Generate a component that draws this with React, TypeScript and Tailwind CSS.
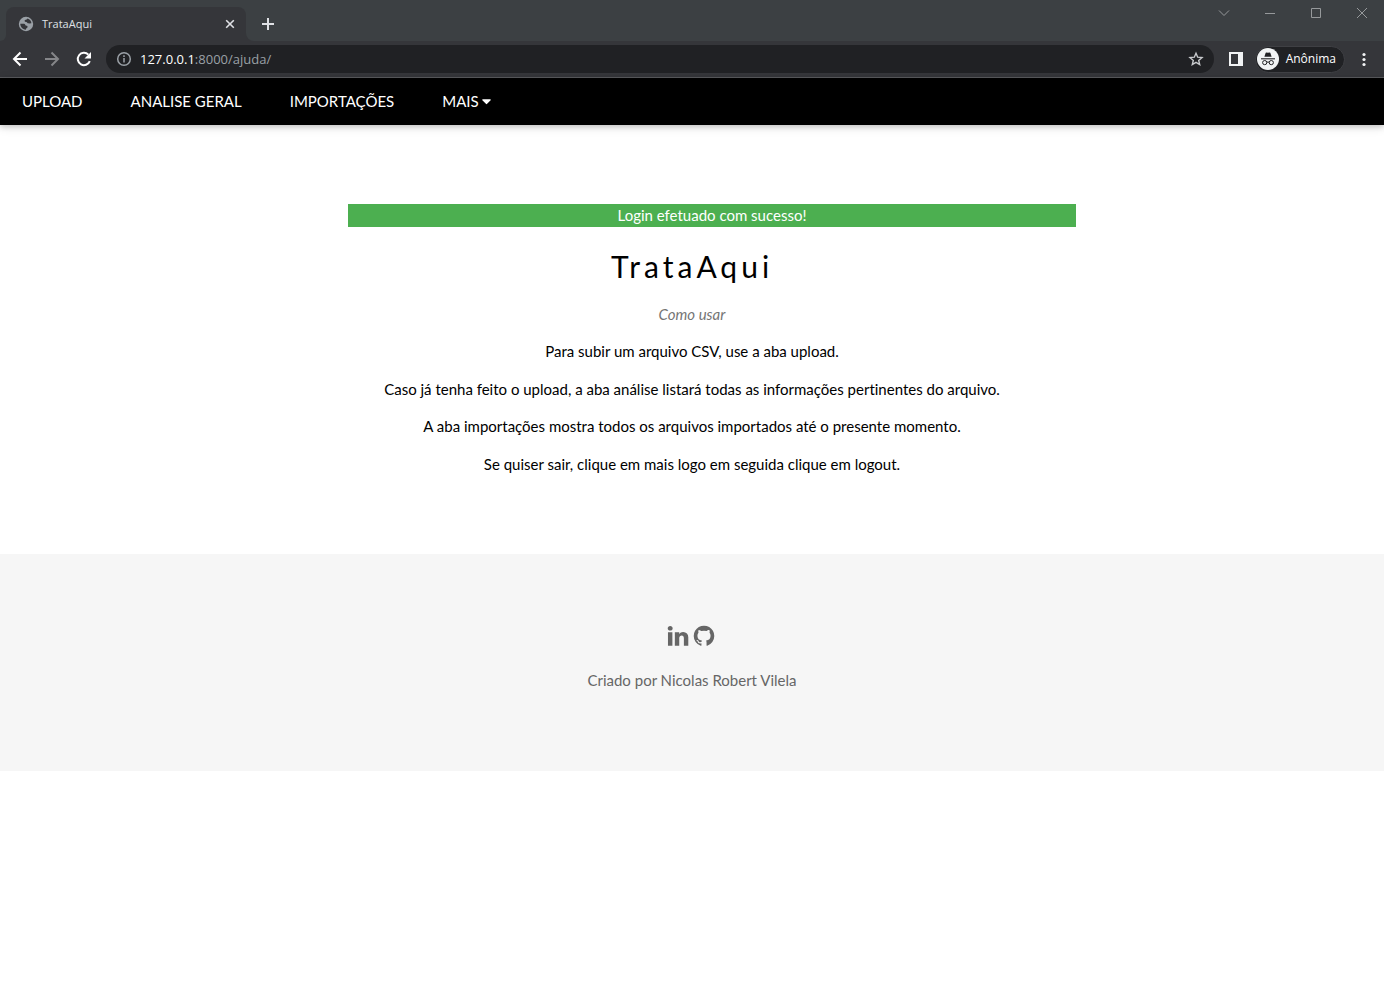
import React from "react";

function BrowserTabs() {
  return (
    <div className="flex h-[41px] items-start bg-[#3c4043]">
      <div className="flex h-[41px] items-end">
        <div className="h-2 w-[6px] bg-[#35363a]">
          <div className="h-2 w-[6px] rounded-br-lg bg-[#3c4043]" />
        </div>
        <div className="flex h-[34px] w-[240px] items-center rounded-t-lg bg-[#35363a] pr-2 pl-3">
          <svg className="size-4" viewBox="0 0 16 16" aria-hidden="true">
            <circle cx="8" cy="8" r="7.2" fill="#9aa0a6" />
            <path
              d="M9.400 2.500c-.3 1.300-1.500 1.200-2.300 1.500-.8.400-.7 1.400.1 1.700.9.300 1.600.1 1.900.9.300.8 1 .9 1.900.9l2.400-.2c0-2.200-1.600-4.200-4-4.800zM2.300 7.800c-.1 2.900 2.200 5.600 5.500 5.900.2-.8.300-1.400 1.100-1.700.9-.4.900-1.700.1-2.200-.7-.4-1.400-.2-1.700-.9-.3-.8-.9-1.100-1.900-1.100z"
              fill="#35363a"
            />
          </svg>
          <span className="ml-2 flex-1 font-['Open_Sans','Noto_Sans',sans-serif] text-[11px] text-[#dfe1e5]">
            TrataAqui
          </span>
          <button type="button" aria-label="Fechar guia" className="p-[2px]">
            <svg className="size-3" viewBox="0 0 12 12" stroke="#dfe1e5" strokeWidth="1.6" aria-hidden="true">
              <path d="M2.200 2.200l7.600 7.600M9.800 2.200l-7.600 7.600" />
            </svg>
          </button>
        </div>
        <div className="h-2 w-2 bg-[#35363a]">
          <div className="h-2 w-2 rounded-bl-lg bg-[#3c4043]" />
        </div>
      </div>
      <button type="button" aria-label="Nova guia" className="mt-4 ml-[6px]">
        <svg className="size-4" viewBox="0 0 16 16" stroke="#dfe1e5" strokeWidth="2" aria-hidden="true">
          <path d="M8 2v12M2 8h12" />
        </svg>
      </button>
      <div className="ml-auto flex gap-[30px] pt-[5px] pr-[14px]">
        <button type="button" aria-label="Pesquisar guias">
          <svg className="size-4" viewBox="0 0 16 16" fill="none" stroke="#96999b" aria-hidden="true">
            <path d="M3 5.500l5 5 5-5" />
          </svg>
        </button>
        <button type="button" aria-label="Minimizar">
          <svg className="size-4" viewBox="0 0 16 16" stroke="#96999b" aria-hidden="true">
            <path d="M3 8.500h10" />
          </svg>
        </button>
        <button type="button" aria-label="Maximizar">
          <svg className="size-4" viewBox="0 0 16 16" fill="none" stroke="#96999b" aria-hidden="true">
            <path d="M3.500 3.500h9v9h-9z" />
          </svg>
        </button>
        <button type="button" aria-label="Fechar">
          <svg className="size-4" viewBox="0 0 16 16" stroke="#96999b" aria-hidden="true">
            <path d="M3 3l10 10M13 3L3 13" />
          </svg>
        </button>
      </div>
    </div>
  );
}

function BrowserToolbar() {
  return (
    <div className="flex h-[37px] items-center border-b border-[#5b5c5f] bg-[#35363a] pr-3 pl-[10px] font-['Open_Sans','Noto_Sans',sans-serif]">
      <div className="flex gap-3">
        <button type="button" aria-label="Voltar">
          <svg className="size-5" viewBox="0 0 20 20" fill="none" stroke="#fff" strokeWidth="2" aria-hidden="true">
            <path d="M17 10H4.500M10.500 3.500L4 10l6.500 6.500" />
          </svg>
        </button>
        <button type="button" aria-label="Avançar">
          <svg className="size-5" viewBox="0 0 20 20" fill="none" stroke="#858689" strokeWidth="2" aria-hidden="true">
            <path d="M3 10h12.500M9.500 3.500L16 10l-6.500 6.500" />
          </svg>
        </button>
        <button type="button" aria-label="Recarregar">
          <svg className="size-5" viewBox="0 0 20 20" fill="none" aria-hidden="true">
            <path d="M15.800 12.200A6.200 6.200 0 1 1 14.400 5.600" stroke="#fff" strokeWidth="2" />
            <path d="M17 3v6.500h-6.500z" fill="#fff" />
          </svg>
        </button>
      </div>
      <div className="ml-3 flex h-7 flex-1 items-center rounded-full bg-[#202124] pr-[10px] pl-[10px]">
        <svg className="size-4" viewBox="0 0 16 16" fill="none" stroke="#9aa0a6" strokeWidth="1.500" aria-hidden="true">
          <circle cx="8" cy="8" r="6.300" />
          <path d="M8 7v4.500M8 4.300v1.600" />
        </svg>
        <p className="ml-2 flex-1 text-[13px] leading-5 text-[#9aa0a6]">
          <span className="text-white">127.0.0.1</span>:8000/ajuda/
        </p>
        <button type="button" aria-label="Adicionar aos favoritos">
          <svg className="size-4" viewBox="0 0 16 16" fill="none" stroke="#c8cacd" strokeWidth="1.400" aria-hidden="true">
            <path d="M8 2.200l1.700 4 4.300.4-3.300 2.800 1 4.200L8 11.400l-3.700 2.200 1-4.200L2 6.600l4.300-.4z" />
          </svg>
        </button>
      </div>
      <button type="button" aria-label="Painel lateral" className="ml-[14px]">
        <svg className="size-4" viewBox="0 0 16 16" aria-hidden="true">
          <path fillRule="evenodd" d="M1 1h14v14H1zM3 3v10h7V3z" fill="#f1f3f4" />
        </svg>
      </button>
      <button
        type="button"
        className="ml-[11px] flex h-[27px] items-center rounded-full border border-[#3f4044] bg-[#202124] pr-2 pl-px text-xs text-white"
      >
        <svg className="size-[22px]" viewBox="0 0 22 22" aria-hidden="true">
          <circle cx="11" cy="11" r="11" fill="#f1f3f4" />
          <path d="M7.400 8.800l1.300-4 .9-.4 1.400.4 1.400-.4.9.4 1.300 4z" fill="#202124" />
          <path d="M4 10.800h14" stroke="#202124" strokeWidth="1.100" />
          <g fill="none" stroke="#202124" strokeWidth="1">
            <circle cx="7.700" cy="14.600" r="2.100" />
            <circle cx="14.300" cy="14.600" r="2.100" />
            <path d="M9.800 14.300q1.200-.7 2.400 0" />
          </g>
        </svg>
        <span className="ml-[7px]">Anônima</span>
      </button>
      <button type="button" aria-label="Mais opções" className="ml-[11px]">
        <svg className="size-4" viewBox="0 0 16 16" fill="#f1f3f4" aria-hidden="true">
          <circle cx="8" cy="3.500" r="1.600" />
          <circle cx="8" cy="8.500" r="1.600" />
          <circle cx="8" cy="13.500" r="1.600" />
        </svg>
      </button>
    </div>
  );
}

const links = [
  { label: "UPLOAD", href: "#upload" },
  { label: "ANALISE GERAL", href: "#analise" },
  { label: "IMPORTAÇÕES", href: "#importacoes" },
];

function SiteNav() {
  return (
    <nav className="flex h-[47px] items-center gap-12 bg-black pl-[22px] text-white shadow-[0_2px_5px_0_rgba(0,0,0,0.16),0_2px_10px_0_rgba(0,0,0,0.12)]">
      {links.map((link) => (
        <a key={link.href} href={link.href}>
          {link.label}
        </a>
      ))}
      <button type="button" className="flex items-center">
        MAIS
        <svg className="size-[15px]" viewBox="0 0 1792 1792" fill="currentColor" aria-hidden="true">
          <path d="M1408 704q0 26-19 45l-448 448q-19 19-45 19t-45-19l-448-448q-19-19-19-45t19-45 45-19h896q26 0 45 19t19 45z" />
        </svg>
      </button>
    </nav>
  );
}

const steps = [
  "Para subir um arquivo CSV, use a aba upload.",
  "Caso já tenha feito o upload, a aba análise listará todas as informações pertinentes do arquivo.",
  "A aba importações mostra todos os arquivos importados até o presente momento.",
  "Se quiser sair, clique em mais logo em seguida clique em logout.",
];

function Help() {
  return (
    <main className="mx-auto max-w-[800px] px-4 pt-[79px] pb-[79px] text-center">
      <ul className="pl-10">
        <li className="bg-[#4caf50] text-white">Login efetuado com sucesso!</li>
      </ul>
      <h2 className="mt-4 text-3xl leading-[46px] tracking-[4px]">TrataAqui</h2>
      <div className="mt-[14px] flex flex-col gap-[15px]">
        <p className="text-[#757575] italic">Como usar</p>
        {steps.map((step) => (
          <p key={step}>{step}</p>
        ))}
      </div>
    </main>
  );
}

function Footer() {
  return (
    <footer className="bg-[#f6f6f6] pt-[70px] pb-[79px] text-center text-[#666666]">
      <div className="flex justify-center gap-[2px] pr-[2px]">
        <a href="#linkedin" aria-label="LinkedIn">
          <svg className="size-6" viewBox="0 0 1792 1792" fill="currentColor" aria-hidden="true">
            <path d="M477 625v991h-330v-991h330zm21-306q1 73-50.5 122t-135.5 49h-2q-82 0-132-49t-50-122q0-74 51.5-122.5t134.5-48.5 133 48.5 51 122.5zm1166 729v568h-329v-530q0-105-40.5-164.5t-126.5-59.5q-63 0-105.5 34.5t-63.5 85.5q-11 30-11 81v553h-329q2-399 2-647t-1-296l-1-48h329v144h-2q20-32 41-56t56.5-52 87-43.5 114.5-15.5q171 0 278 113.5t107 332.5z" />
          </svg>
        </a>
        <a href="#github" aria-label="GitHub">
          <svg className="size-6" viewBox="0 0 1792 1792" fill="currentColor" aria-hidden="true">
            <path d="M896 128q209 0 385.5 103t279.5 279.5 103 385.5q0 251-146.5 451.5t-378.5 277.5q-27 5-40-7t-13-30q0-3 .5-76.5t.5-134.5q0-97-52-142 57-6 102.5-18t94-39 81-66.5 53-105 20.5-150.5q0-119-79-206 37-91-8-204-28-9-81 11t-92 44l-38 24q-93-26-192-26t-192 26q-16-11-42.5-27t-83.5-38.5-85-13.5q-45 113-8 204-79 87-79 206 0 85 20.5 150t52.5 105 80.5 67 94 39 102.5 18q-39 36-49 103-21 10-45 15t-57 5-65.5-21.5-55.5-62.5q-19-32-48.5-52t-49.5-24l-20-3q-21 0-29 4.5t-5 11.5 9 14 13 12l7 5q22 10 43.5 38t31.5 51l10 23q13 38 44 61.5t67 30 69.5 7 55.5-3.5l23-4q0 38 .5 88.5t.5 54.5q0 18-13 30t-40 7q-232-77-378.5-277.5t-146.5-451.5q0-209 103-385.5t279.5-279.5 385.5-103z" />
          </svg>
        </a>
      </div>
      <p className="mt-[21px]">Criado por Nicolas Robert Vilela</p>
    </footer>
  );
}

export default function App() {
  return (
    <div className="min-h-screen bg-white font-[Lato,sans-serif] text-[15px] leading-normal text-black [font-variant-ligatures:none]">
      <header>
        <BrowserTabs />
        <BrowserToolbar />
        <SiteNav />
      </header>
      <Help />
      <Footer />
    </div>
  );
}
